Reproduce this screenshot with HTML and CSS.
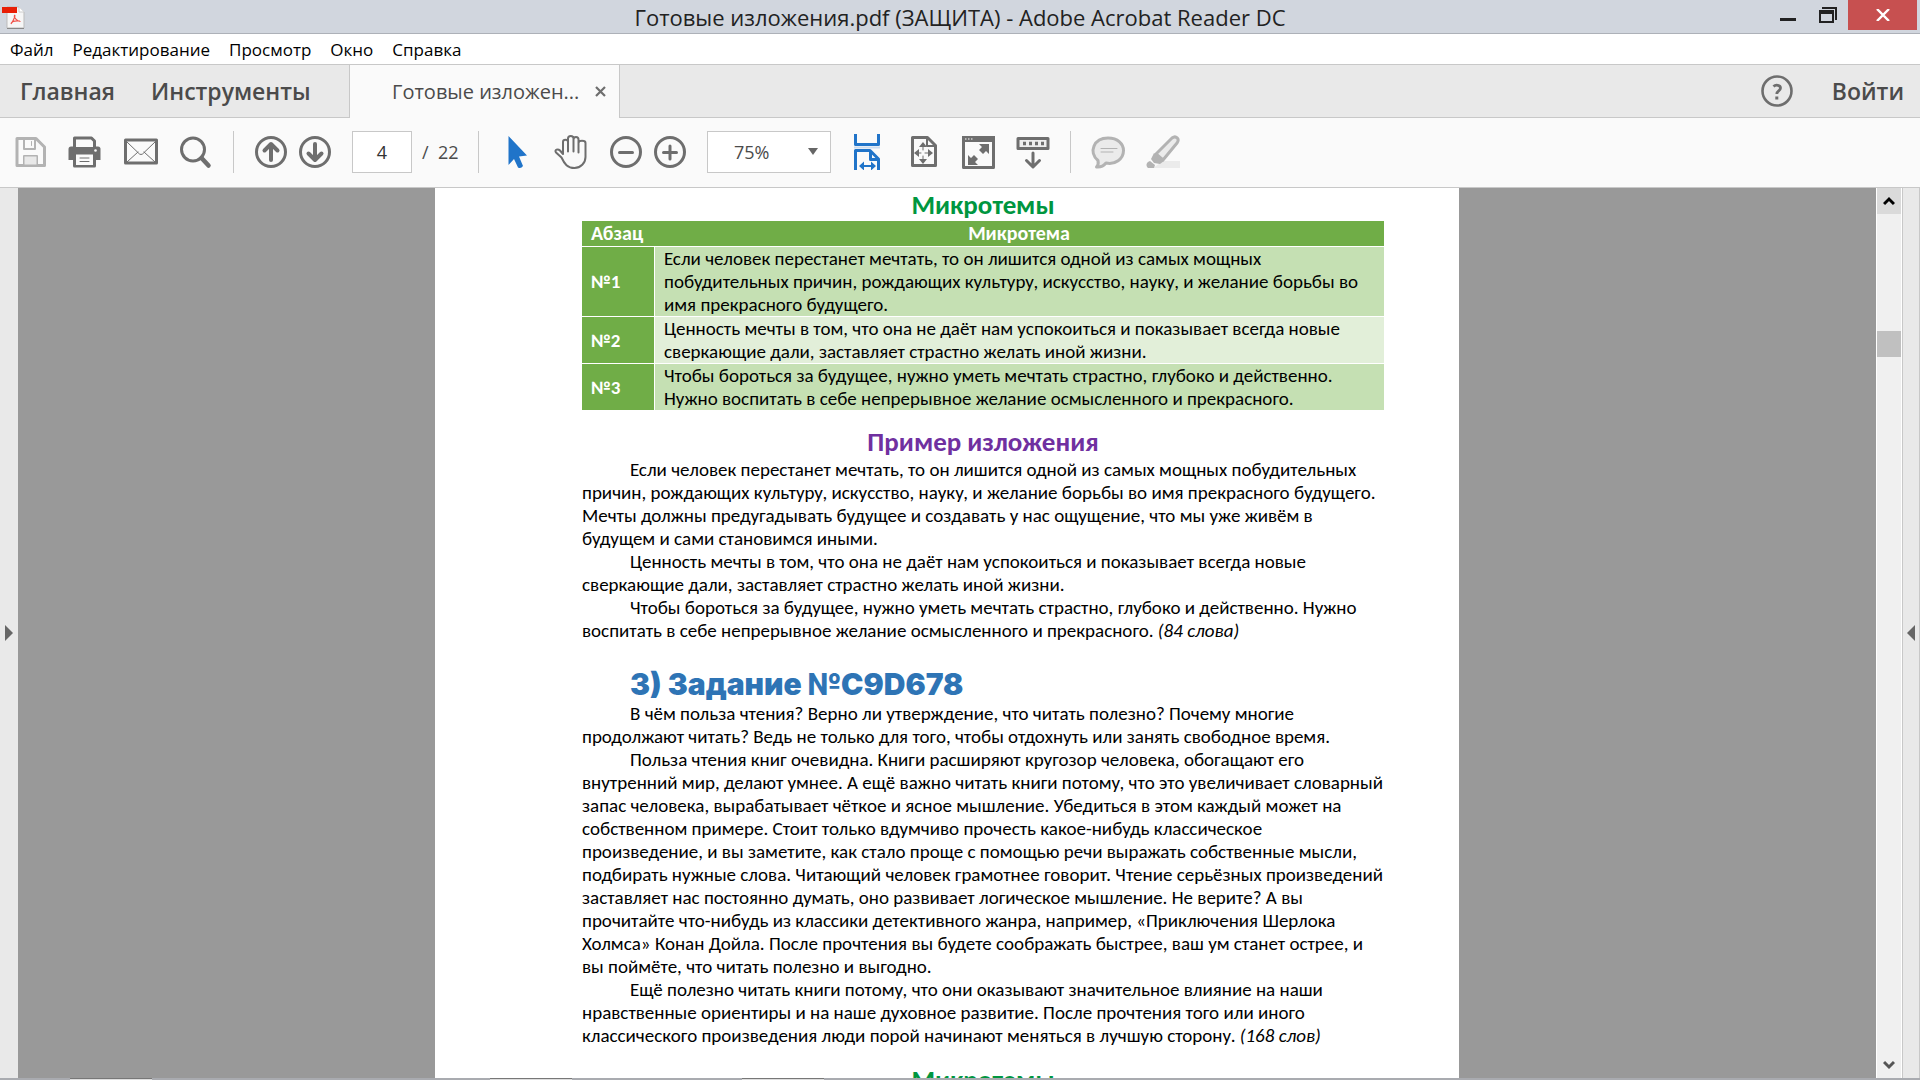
FILE: index.html
```html
<!DOCTYPE html>
<html lang="ru">
<head>
<meta charset="utf-8">
<title>Готовые изложения.pdf (ЗАЩИТА) - Adobe Acrobat Reader DC</title>
<link rel="stylesheet" href="styles.css">
</head>
<body>
<header class="titlebar">
  <svg class="app-icon" width="24" height="24" viewBox="0 0 24 24" aria-hidden="true">
    <path d="M5 1h12l5 5v16H5z" fill="#f6f6f6" stroke="#bbb"/><path d="M5 22.500h17" stroke="#888"/><path d="M17 1v5h5" fill="#fff" stroke="#ccc"/>
    <path d="M0 1h15v6H0z" fill="#e81e05"/>
    <path d="M12.500 9c1 0 0 4-3.500 9M12.500 9c-1 2 2 6 6 6.500M9 17.500c1-2 5-3 9-2.500" fill="none" stroke="#ef5148" stroke-width="1.200"/>
  </svg>
  <h1 class="window-title">Готовые изложения.pdf (ЗАЩИТА) - Adobe Acrobat Reader DC</h1>
  <div class="window-buttons">
    <button type="button" class="win-btn" aria-label="Свернуть"><svg width="16" height="16" viewBox="0 0 16 16"><path d="M0 11h16v3H0z" fill="#222"/></svg></button>
    <button type="button" class="win-btn" aria-label="Восстановить"><svg width="18" height="16" viewBox="0 0 18 16"><path d="M3 0h15v13h-2V2H3zM0 3h15v13H0zM2 7v7h11V7z" fill="#222" fill-rule="evenodd"/></svg></button>
    <button type="button" class="win-btn win-close" aria-label="Закрыть"><svg width="14" height="12" viewBox="0 0 14 12"><path d="M1 0l12 12M13 0L1 12" stroke="#fff" stroke-width="2.400"/></svg></button>
  </div>
</header>
<nav class="menubar">
  <button type="button">Файл</button><button type="button">Редактирование</button><button type="button">Просмотр</button><button type="button">Окно</button><button type="button">Справка</button>
</nav>
<div class="tabbar">
  <div class="tabs-home"><a href="#home">Главная</a><a href="#tools">Инструменты</a></div>
  <div class="doc-tab"><a href="#document">Готовые изложен...</a>
    <button type="button" aria-label="Закрыть вкладку"><svg width="11" height="11" viewBox="0 0 11 11"><path d="M1 1l9 9M10 1l-9 9" stroke="#6e6e6e" stroke-width="2.200"/></svg></button></div>
  <div class="tabs-end">
    <button type="button" class="help" aria-label="Справка"><svg width="34" height="34" viewBox="0 0 34 34" fill="none" stroke="#6e6e6e"><circle cx="17" cy="17" r="14.500" stroke-width="2.600"/><path d="M13.500 12.500c2-2 7-1.700 7 1.500 0 3-3.700 2.800-3.700 6" stroke-width="2.800"/><path d="M15.300 22.500h3v3h-3z" fill="#6e6e6e" stroke="none"/></svg></button>
    <a href="#signin">Войти</a>
  </div>
</div>
<div class="toolbar">
  <button type="button" aria-label="Сохранить"><svg class="icon pale" viewBox="0 0 36 36"><path d="M4 4.500h19l8.500 8.500v18.500H4z" class="line"/><path d="M11 5v10h11V5M11 31v-9h13v9" class="fine"/><path d="M11.500 22.500h12v8h-12z" fill="#e9e9e9"/><path d="M18.500 7.500v4" class="hair"/></svg></button>
  <button type="button" aria-label="Печать"><svg class="icon" viewBox="0 0 36 36"><path d="M.500 15q0-2.500 2.500-2.500h27q2.500 0 2.500 2.500v11H.500z" fill="currentColor"/><path d="M6.500 13V4h17l3 3v6M6.500 22v10h20V22" fill="#fafafa" class="line"/><path d="M8 19h17v12H8z" fill="#fafafa"/><path d="M4.500 18.500h24" stroke="currentColor" stroke-width="4"/><circle cx="27.500" cy="16.500" r="1.300" fill="#fafafa"/><path d="M12 24h9M12 27.500h9" class="hair"/></svg></button>
  <button type="button" aria-label="Электронная почта"><svg class="icon" viewBox="0 0 36 36"><path d="M2.500 6h31v23h-31z" class="line"/><path d="M4 8l12.500 12q1.500 1 3 0L32 8M4 28l11-10M32 28L21 18" class="hair"/></svg></button>
  <button type="button" aria-label="Поиск"><svg class="icon" viewBox="0 0 36 36"><circle cx="15" cy="15.500" r="11.500" class="line"/><path d="M23.500 24l7 7.500" stroke="currentColor" stroke-width="4.500" stroke-linecap="round"/></svg></button>
  <span class="sep"></span>
  <div class="pair">
    <button type="button" aria-label="Предыдущая страница"><svg class="icon" viewBox="0 0 36 36"><circle cx="18" cy="18" r="14.500" class="line"/><path d="M18 26V11M11.500 16.500L18 10l6.500 6.500" class="bold"/></svg></button>
    <button type="button" aria-label="Следующая страница"><svg class="icon" viewBox="0 0 36 36"><circle cx="18" cy="18" r="14.500" class="line"/><path d="M18 10v15M11.500 19.500L18 26l6.500-6.500" class="bold"/></svg></button>
  </div>
  <div class="page-nav"><input type="text" value="4" aria-label="Номер страницы"><span>/&nbsp; 22</span></div>
  <span class="sep"></span>
  <button type="button" aria-label="Выделение"><svg class="icon active" viewBox="0 0 36 36"><path d="M10.500 2L29 21.500l-8 1L25 32q-2 3-5 1.500L16 25l-5.500 6z" fill="currentColor"/></svg></button>
  <button type="button" aria-label="Рука"><svg class="icon" viewBox="0 0 36 36"><path d="M8.500 23.500L3 18.500c-2-3 2-4 4-2l3 3.500V8c0-3 5-3 5 0v9.500V4.500c0-3.500 5.500-3.500 5.500 0V17.500 5.500c0-3.500 5-3.500 5 0V18.500 9c0-3 7-3 7 0v14c0 6-5 11-11 11-7 0-10-4-13-10.500" class="fine"/></svg></button>
  <div class="pair">
    <button type="button" aria-label="Уменьшить"><svg class="icon" viewBox="0 0 36 36"><circle cx="18" cy="18" r="14.500" class="line"/><path d="M11.500 18.500h13" class="line"/></svg></button>
    <button type="button" aria-label="Увеличить"><svg class="icon" viewBox="0 0 36 36"><circle cx="18" cy="18" r="14.500" class="line"/><path d="M11.500 18.500h13M18 12v13" class="line"/></svg></button>
  </div>
  <label class="zoom"><select aria-label="Масштаб"><option>75%</option></select><svg width="10" height="7" viewBox="0 0 10 7"><path d="M0 0h10L5 7z" fill="#666"/></svg></label>
  <button type="button" aria-label="По ширине"><svg class="icon active" viewBox="0 0 36 36"><path d="M5.500 0v10.500h23V0" class="square"/><path d="M4 13.500h26" stroke="#cbdcf0" stroke-width="2"/><path d="M5.500 36V16.500H20l8.500 8.500V36M20.500 17v8.500H28" class="square"/><path d="M11 32h13" class="fine"/><path d="M14 27.500v9L9 32zM21 27.500v9l5-4.500z" fill="currentColor"/></svg></button>
  <button type="button" aria-label="По размеру страницы"><svg class="icon" viewBox="0 0 36 36"><path d="M7.500 3.500h15l8 8v20h-23z" class="line"/><path d="M22 4v8h8" class="fine"/><path d="M18 8l4 5h-8zM18 30l4-5h-8zM9 19l5-4v8zM28 19l-5-4v8z" fill="currentColor"/><path d="M18 11v5M18 22v5M11 19h5M20 19h6" class="hair"/></svg></button>
  <button type="button" aria-label="Полный экран"><svg class="icon" viewBox="0 0 36 36"><path d="M3.500 3.500h30v30h-30z" class="line"/><path d="M2 2h33v6H2z" fill="currentColor"/><path d="M5 5h1.500M8 5h1.500M11 5h1.500" stroke="#fff"/><path d="M19 10h10v10l-3-3-3 3-4-4 3-3zM8 21l3 3 3-3 4 4-3 3 3 3H8z" fill="currentColor"/></svg></button>
  <button type="button" aria-label="Режим чтения"><svg class="icon" viewBox="0 0 36 36"><path d="M3 4.500h30v10H3z" fill="#eee" class="line"/><path d="M8 9.500h22" stroke="currentColor" stroke-width="3.500" stroke-dasharray="3 3"/><path d="M18 19v13M11.500 26.500L18 33l6.500-6.500" class="line"/></svg></button>
  <span class="sep"></span>
  <button type="button" aria-label="Комментарий"><svg class="icon pale" viewBox="0 0 36 36"><path d="M8 26.500C-2 18 4 4 18 4c10 0 15.500 6 15.500 12.500C33.500 25 25 31 16 29c-2 2.500-5 4.500-9.500 4 2-2 2-4 1.500-6.500z" fill="#ebebeb" class="line"/><path d="M11 14.500h16M11 18h12" class="hair"/></svg></button>
  <button type="button" aria-label="Маркер"><svg class="icon pale" viewBox="0 0 36 36"><path d="M8 34l10-7h17v7z" fill="#ebebeb"/><path d="M11 20L27 4c4-3 8 1 5 5L18 26z" fill="#ebebeb" class="line"/><path d="M9 19l10 8-4 3-6-1-3-4zM5 27l5 4-1 3H3c-3-3-1-6 2-7z" fill="currentColor"/></svg></button>
</div>
<main class="viewer">
  <button type="button" class="side" aria-label="Показать левую панель"><svg width="8" height="16" viewBox="0 0 8 16"><path d="M0 0l8 8-8 8z" fill="#666"/></svg></button>
  <div class="canvas">
    <article class="page">
      <h2 class="green">Микротемы</h2>
      <table>
        <thead><tr><th scope="col">Абзац</th><th scope="col" class="topic">Микротема</th></tr></thead>
        <tbody>
          <tr><th scope="row">№1</th><td>Если человек перестанет мечтать, то он лишится одной из самых мощных<br>побудительных причин, рождающих культуру, искусство, науку, и желание борьбы во<br>имя прекрасного будущего.</td></tr>
          <tr><th scope="row">№2</th><td>Ценность мечты в том, что она не даёт нам успокоиться и показывает всегда новые<br>сверкающие дали, заставляет страстно желать иной жизни.</td></tr>
          <tr><th scope="row">№3</th><td>Чтобы бороться за будущее, нужно уметь мечтать страстно, глубоко и действенно.<br>Нужно воспитать в себе непрерывное желание осмысленного и прекрасного.</td></tr>
        </tbody>
      </table>
      <h2 class="purple">Пример изложения</h2>
      <p>Если человек перестанет мечтать, то он лишится одной из самых мощных побудительных<br>причин, рождающих культуру, искусство, науку, и желание борьбы во имя прекрасного будущего.<br>Мечты должны предугадывать будущее и создавать у нас ощущение, что мы уже живём в<br>будущем и сами становимся иными.</p>
      <p>Ценность мечты в том, что она не даёт нам успокоиться и показывает всегда новые<br>сверкающие дали, заставляет страстно желать иной жизни.</p>
      <p>Чтобы бороться за будущее, нужно уметь мечтать страстно, глубоко и действенно. Нужно<br>воспитать в себе непрерывное желание осмысленного и прекрасного. <em>(84 слова)</em></p>
      <h2 class="task">3) Задание №C9D678</h2>
      <p>В чём польза чтения? Верно ли утверждение, что читать полезно? Почему многие<br>продолжают читать? Ведь не только для того, чтобы отдохнуть или занять свободное время.</p>
      <p>Польза чтения книг очевидна. Книги расширяют кругозор человека, обогащают его<br>внутренний мир, делают умнее. А ещё важно читать книги потому, что это увеличивает словарный<br>запас человека, вырабатывает чёткое и ясное мышление. Убедиться в этом каждый может на<br>собственном примере. Стоит только вдумчиво прочесть какое-нибудь классическое<br>произведение, и вы заметите, как стало проще с помощью речи выражать собственные мысли,<br>подбирать нужные слова. Читающий человек грамотнее говорит. Чтение серьёзных произведений<br>заставляет нас постоянно думать, оно развивает логическое мышление. Не верите? А вы<br>прочитайте что-нибудь из классики детективного жанра, например, «Приключения Шерлока<br>Холмса» Конан Дойла. После прочтения вы будете соображать быстрее, ваш ум станет острее, и<br>вы поймёте, что читать полезно и выгодно.</p>
      <p>Ещё полезно читать книги потому, что они оказывают значительное влияние на наши<br>нравственные ориентиры и на наше духовное развитие. После прочтения того или иного<br>классического произведения люди порой начинают меняться в лучшую сторону. <em>(168 слов)</em></p>
      <h2 class="green next">Микротемы</h2>
    </article>
  </div>
  <div class="scroll">
    <button type="button" class="up" aria-label="Вверх"><svg width="12" height="10" viewBox="0 0 12 10"><path d="M1 8l5-5 5 5" fill="none" stroke="#000" stroke-width="3"/></svg></button>
    <div class="track"><div class="thumb"></div></div>
    <button type="button" aria-label="Вниз"><svg width="12" height="10" viewBox="0 0 12 10"><path d="M1 2l5 5 5-5" fill="none" stroke="#555" stroke-width="3"/></svg></button>
  </div>
  <button type="button" class="side right" aria-label="Показать правую панель"><svg width="8" height="16" viewBox="0 0 8 16"><path d="M8 0L0 8l8 8z" fill="#666"/></svg></button>
</main>
<footer class="taskbar"><span></span><span></span><span></span></footer>
</body>
</html>
```
FILE: styles.css
```css
* { box-sizing: border-box; }
body { margin: 0; height: 100vh; display: flex; flex-direction: column; overflow: hidden; font-family: "Open Sans", "Noto Sans", sans-serif; background: #fafafa; color: #4b4b4b; }
button { border: 0; padding: 0; background: none; color: inherit; font: inherit; display: flex; align-items: center; justify-content: center; }
a { color: inherit; text-decoration: none; white-space: nowrap; }
svg { display: block; flex: none; }

.titlebar { flex: none; display: grid; grid-template-columns: 1fr auto 1fr; height: 34px; background: #d1d6de; border-bottom: 1px solid #adb1b8; }
.app-icon { margin: 6px 0 0 2px; }
.window-title { margin: 0; font-size: 22px; font-weight: 400; line-height: 34px; color: #222; white-space: nowrap; }
.window-buttons { display: flex; justify-content: flex-end; padding-right: 3px; }
.win-btn { width: 40px; height: 30px; }
.win-close { width: 69px; background: #c75050; }

.menubar { flex: none; display: flex; align-items: center; gap: 19px; height: 31px; padding-left: 10px; background: #fff; border-bottom: 1px solid #c8c8c8; color: #000; font-size: 17px; }

.tabbar { flex: none; display: flex; height: 53px; font-size: 23px; font-weight: 600; }
.tabs-home, .tabs-end { display: flex; align-items: center; background: #e9e9e9; border-bottom: 1px solid #c8c8c8; }
.tabs-home { width: 350px; gap: 36px; padding-left: 20px; border-right: 1px solid #c8c8c8; }
.tabs-end { flex: 1; justify-content: flex-end; gap: 38px; padding-right: 16px; border-left: 1px solid #c8c8c8; }
.doc-tab { width: 269px; display: flex; align-items: center; justify-content: space-between; padding: 0 13px 0 42px; font-size: 20px; font-weight: 400; }

.toolbar { flex: none; display: flex; align-items: center; gap: 19px; height: 70px; padding: 0 13px 2px; border-bottom: 1px solid #c8c8c8; }
.pair { display: flex; gap: 8px; }
.sep { width: 1px; height: 42px; background: #c8c8c8; }
.icon { width: 36px; height: 36px; color: #6e6e6e; }
.icon.pale { color: #b3b3b3; }
.icon.active { color: #2074c9; }
.line, .fine, .hair, .bold, .square { stroke: currentColor; stroke-width: 3; stroke-linejoin: round; stroke-linecap: round; }
.line:not([fill]), .fine, .hair, .bold, .square { fill: none; }
.square { stroke-linecap: butt; }
.fine { stroke-width: 2; }
.hair { stroke-width: 1; }
.bold { stroke-width: 4; }
.page-nav { display: flex; align-items: center; gap: 10px; width: 107px; font-size: 18px; white-space: nowrap; }
.page-nav input { width: 60px; height: 42px; border: 1px solid #c8c8c8; background: #fff; text-align: center; font: inherit; color: #333; }
.zoom { display: flex; align-items: center; width: 124px; height: 42px; padding-right: 12px; background: #fff; border: 1px solid #c8c8c8; }
.zoom select { flex: 1; min-width: 0; height: 40px; padding: 0 0 0 26px; border: 0; background: none; appearance: none; font: inherit; font-size: 18px; color: #4b4b4b; }

.viewer { flex: 1; min-height: 0; display: flex; background: #999; }
.side { width: 18px; background: #e9e9e9; }
.side.right { border-left: 1px solid #c8c8c8; border-right: 1px solid #c8c8c8; }
.canvas { flex: 1; display: flex; justify-content: center; overflow: hidden; }
.page { width: 1024px; padding: 0 75px 0 147px; background: #fff; color: #000; font-family: Calibri, Carlito, Lato, sans-serif; font-size: 19px; line-height: 23px; white-space: nowrap; }
.page p { margin: 0; text-indent: 48px; }
.page h2 { margin: 0; text-align: center; font-size: 27px; font-weight: 900; line-height: 33px; }
.page .green { color: #00963f; }
.page .purple { margin-top: 15px; color: #7030a0; }
.page .task { margin-top: 24px; text-align: left; text-indent: 48px; font-family: Inter, sans-serif; font-size: 30px; line-height: 36px; color: #2e74b5; }
.page .next { margin-top: 16px; }
table { width: 802px; border-collapse: separate; border-spacing: 0; table-layout: fixed; }
th { width: 72px; padding: 0 0 0 9px; text-align: left; background: #70ad47; color: #fff; }
th.topic { width: auto; padding: 0 9px; text-align: center; }
thead th { height: 25px; padding-right: 0; font-size: 20px; }
td { padding: 0 9px; background: #c5e0b3; border-left: 1px solid #fff; }
tbody th, tbody td { border-top: 1px solid #fff; }
tbody tr:nth-child(2) td { background: #e2efd9; }

.scroll { width: 26px; display: flex; flex-direction: column; border-left: 1px solid #fff; border-right: 1px solid #fff; background: #f0f0f0; }
.scroll button { height: 26px; }
.scroll .up { background: #dadada; }
.track { flex: 1; padding-top: 117px; }
.thumb { height: 26px; background: #c0c0c0; }

.taskbar { flex: none; display: flex; height: 2px; padding-left: 70px; background: #a9abb0; }
.taskbar span { width: 82px; margin-right: 338px; background: #dedede; border-top: 1px solid #777; }
.taskbar span + span { margin-right: 170px; }
```
